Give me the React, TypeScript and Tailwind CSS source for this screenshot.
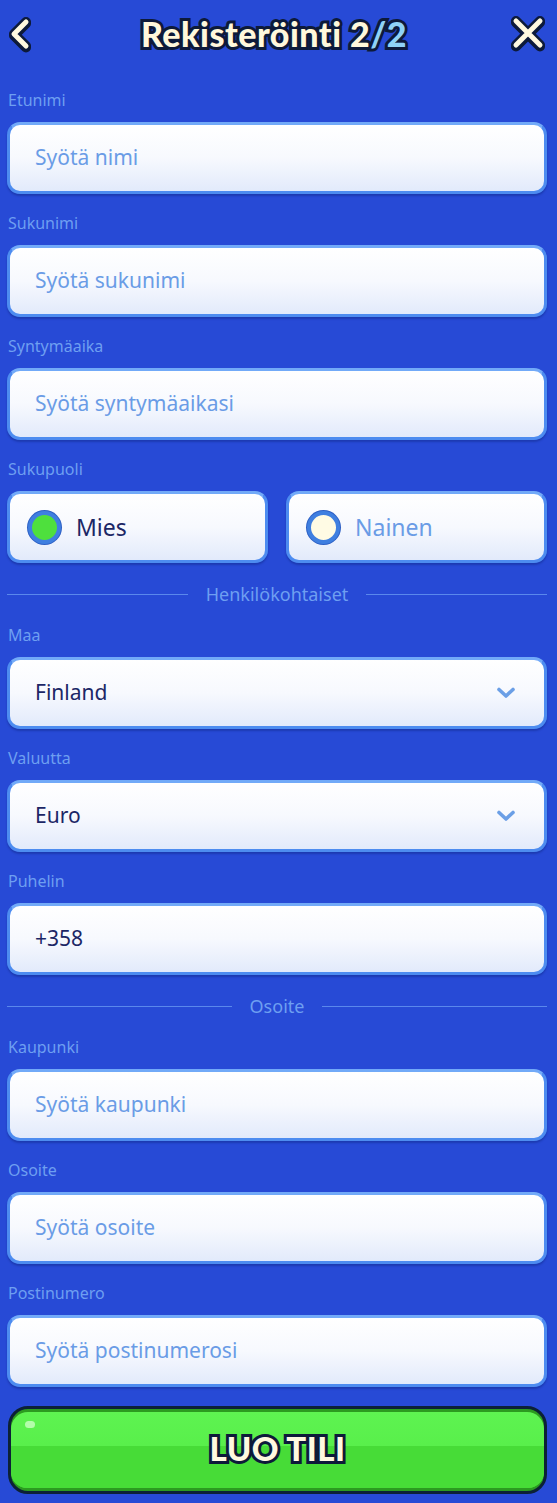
import React from "react";

const FONT = { fontFamily: '"Noto Sans", "Open Sans", sans-serif' };
const HEAVY = { fontFamily: 'Lato, "Noto Sans", sans-serif' };

function Label({ children }: { children: React.ReactNode }) {
  return (
    <div className="h-[20px] text-[16px] leading-[20px] text-[#6e9ff1] pl-[1px]">{children}</div>
  );
}

function Box({ children, className = "" }: { children: React.ReactNode; className?: string }) {
  return (
    <div
      className={`h-[72px] rounded-[13px] border-[3px] border-[#4d8cf0] border-t-[#72aaf8] bg-gradient-to-b from-[#ffffff] via-[#f7f9fe] to-[#e2eafb] shadow-[0_2px_2px_rgba(10,30,110,0.35)] flex items-center ${className}`}
    >
      {children}
    </div>
  );
}

function Field({ label, placeholder, value, select }: { label: string; placeholder?: string; value?: string; select?: boolean }) {
  return (
    <div className="flex flex-col gap-[12px]">
      <Label>{label}</Label>
      <Box className="pl-[25px] pr-[26px] justify-between">
        {value ? (
          <span className="text-[21px] text-[#1c2766]">{value}</span>
        ) : (
          <span className="text-[21px] text-[#6a9ce6]">{placeholder}</span>
        )}
        {select && (
          <svg width="20" height="14" viewBox="0 0 20 14" className="mr-[2px]">
            <path d="M3 3.5 L10 10 L17 3.5" fill="none" stroke="#6b9fe6" strokeWidth="3.6" strokeLinecap="round" strokeLinejoin="round" />
          </svg>
        )}
      </Box>
    </div>
  );
}

function Divider({ text }: { text: string }) {
  return (
    <div className="h-[20px] flex items-center gap-[18px]">
      <div className="flex-1 h-px bg-[#5a88ec]" />
      <span className="text-[18px] leading-[20px] text-[#6e9ff1]">{text}</span>
      <div className="flex-1 h-px bg-[#5a88ec]" />
    </div>
  );
}

function Radio({ label, checked }: { label: string; checked?: boolean }) {
  return (
    <Box className="flex-1 pl-[18px] gap-[15px]">
      <div
        className={`w-[33px] h-[33px] rounded-full border-[4px] border-[#3f7fe0] shadow-[0_0_0_1px_#2c5fc4] ${
          checked ? "bg-[#4ee03d]" : "bg-[#fffbe4]"
        }`}
      />
      <span className={`text-[23px] ${checked ? "text-[#1c2766]" : "text-[#6a9ce6]"}`}>{label}</span>
    </Box>
  );
}

export default function App() {
  return (
    <div className="w-[557px] min-h-[1503px] bg-[#274ad6] pl-[7px] pr-[10px] pb-[11px]" style={FONT}>
      {/* Header */}
      <div className="h-[66px] flex items-center justify-between">
        <svg width="30" height="40" viewBox="0 0 30 40" className="-ml-[1px] mt-[1px]">
          <path d="M20 8 L8 20 L20 32" fill="none" stroke="#0d1a3a" strokeWidth="10" strokeLinecap="round" strokeLinejoin="round" transform="translate(0,1.5)" />
          <path d="M20 8 L8 20 L20 32" fill="none" stroke="#0d1a3a" strokeWidth="10" strokeLinecap="round" strokeLinejoin="round" />
          <path d="M20 8 L8 20 L20 32" fill="none" stroke="#fff9e0" strokeWidth="5" strokeLinecap="round" strokeLinejoin="round" />
        </svg>
        <div
          className="ml-[4px] text-[34px] font-black tracking-[0.5px] text-[#fff8dc] [-webkit-text-stroke:6px_#0d1a3a] [paint-order:stroke_fill] [text-shadow:0_2px_0_#0d1a3a]"
          style={HEAVY}
        >
          Rekisteröinti 2<span className="text-[#8fd2f7]">/2</span>
        </div>
        <svg width="40" height="40" viewBox="0 0 40 40" className="-mr-[1px]">
          <g transform="translate(0,1.5)">
            <path d="M8 8 L32 32 M32 8 L8 32" fill="none" stroke="#0d1a3a" strokeWidth="10" strokeLinecap="round" />
          </g>
          <path d="M8 8 L32 32 M32 8 L8 32" fill="none" stroke="#0d1a3a" strokeWidth="10" strokeLinecap="round" />
          <path d="M8 8 L32 32 M32 8 L8 32" fill="none" stroke="#fff9e0" strokeWidth="5" strokeLinecap="round" />
        </svg>
      </div>

      <div className="pt-[24px] flex flex-col gap-[19px]">
        <Field label="Etunimi" placeholder="Syötä nimi" />
        <Field label="Sukunimi" placeholder="Syötä sukunimi" />
        <Field label="Syntymäaika" placeholder="Syötä syntymäaikasi" />
        <div className="flex flex-col gap-[12px]">
          <Label>Sukupuoli</Label>
          <div className="flex gap-[18px]">
            <Radio label="Mies" checked />
            <Radio label="Nainen" />
          </div>
        </div>
      </div>

      <div className="pt-[21px] flex flex-col gap-[21px]">
        <Divider text="Henkilökohtaiset" />
        <div className="flex flex-col gap-[19px]">
          <Field label="Maa" value="Finland" select />
          <Field label="Valuutta" value="Euro" select />
          <Field label="Puhelin" value="+358" />
        </div>
        <Divider text="Osoite" />
        <div className="flex flex-col gap-[19px]">
          <Field label="Kaupunki" placeholder="Syötä kaupunki" />
          <Field label="Osoite" placeholder="Syötä osoite" />
          <Field label="Postinumero" placeholder="Syötä postinumerosi" />
        </div>
      </div>

      <button className="mt-[19px] ml-[1px] w-[539px] h-[88px] rounded-[20px] border-[3px] border-[#0c2136] bg-[#2c9a20] p-0 overflow-hidden block">
        <div className="relative h-[76px] rounded-b-[16px] rounded-t-[17px] bg-gradient-to-b from-[#5ef351] via-[#58ef4a] to-[#45da34] flex items-center justify-center">
          <div className="absolute left-0 right-0 top-[34px] bottom-0 bg-[#47dc37] rounded-b-[16px]" />
          <div className="absolute left-[14px] top-[9px] w-[10px] h-[7px] rounded-full bg-[#c9ffc2] opacity-80" />
          <span
            className="relative -mt-[2px] text-[33px] font-black tracking-[0.5px] text-[#fff9e0] [-webkit-text-stroke:6px_#0d1a3a] [paint-order:stroke_fill] [text-shadow:0_2px_0_#0d1a3a]"
            style={HEAVY}
          >
            LUO TILI
          </span>
        </div>
      </button>
    </div>
  );
}
